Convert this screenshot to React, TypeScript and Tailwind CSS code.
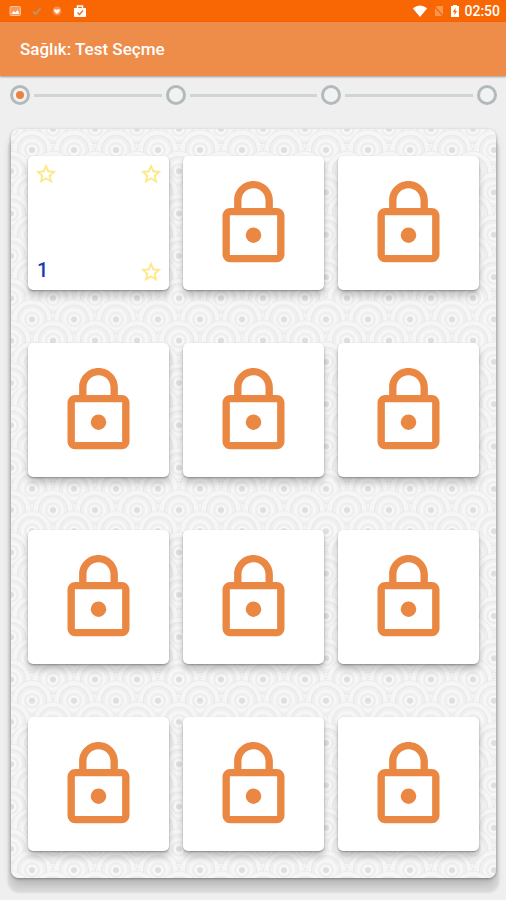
import React, { useState } from 'react';

interface Test {
  id: number;
  unlocked: boolean;
}

const PAGES = [1, 2, 3, 4];

const TESTS: Test[] = Array.from({ length: 12 }, (_, i) => ({ id: i + 1, unlocked: i === 0 }));

const LockIcon: React.FC = () => (
  <svg viewBox="0 0 24 24" className="h-[93px] w-[93px]" fill="#ea8843" aria-hidden="true">
    <path
      fillRule="evenodd"
      d="M18 8h-1V6c0-2.76-2.24-5-5-5S7 3.24 7 6v2H6c-1.1 0-2 .9-2 2v10c0 1.1.9 2 2 2h12c1.1 0 2-.9 2-2V10c0-1.1-.9-2-2-2zM8.9 6c0-1.71 1.39-3.1 3.1-3.1s3.1 1.39 3.1 3.1v2H8.9V6zM18.1 20.1H5.9V9.9h12.2v10.2z"
    />
    <circle cx="12" cy="15" r="2" />
  </svg>
);

const StarIcon: React.FC = () => (
  <svg viewBox="0 0 24 24" className="h-6 w-6" fill="#fde886" stroke="#fde886" strokeWidth="0.3" aria-hidden="true">
    <path d="M22 9.24l-7.19-.62L12 2 9.19 8.63 2 9.24l5.46 4.73L5.82 21 12 17.27 18.18 21l-1.63-7.03L22 9.24zM12 15.4l-3.76 2.27 1-4.28-3.32-2.88 4.38-.38L12 6.1l1.71 4.04 4.38.38-3.32 2.88 1 4.28L12 15.4z" />
  </svg>
);

const Scale: React.FC<{ x: number; y: number }> = ({ x, y }) => (
  <g>
    <circle cx={x} cy={y} r="20" fill="#f6f6f6" stroke="#e8e8e8" strokeWidth="1" strokeDasharray="2 1" />
    <circle cx={x} cy={y} r="14.5" fill="#f0f0f0" stroke="#e7e7e7" strokeWidth="1" />
    <circle cx={x} cy={y} r="11" fill="#f7f7f7" />
    <circle cx={x} cy={y} r="8" fill="#eeeeee" />
    <circle cx={x} cy={y} r="5.5" fill="#f8f8f8" />
    <circle cx={x} cy={y} r="3" fill="#dedede" />
  </g>
);

// overlapping circles, each row drawn over the one above it
const ScalePattern: React.FC = () => (
  <svg className="absolute inset-0 h-full w-full rounded-lg" aria-hidden="true">
    <defs>
      <pattern id="scales" width="42" height="42.36" patternUnits="userSpaceOnUse" patternTransform="translate(21 21)">
        {[-1, 0, 1, 2, 3].map(row =>
          [-1, 0, 1, 2].map(col => (
            <Scale key={`${row}-${col}`} x={col * 42 + (row % 2 === 0 ? 0 : 21)} y={row * 21.18} />
          ))
        )}
      </pattern>
    </defs>
    <rect width="100%" height="100%" fill="url(#scales)" />
  </svg>
);

const StatusBar: React.FC = () => (
  <div className="flex h-[22px] items-center justify-between bg-[#f96604] pl-2 pr-1.5">
    <div className="flex items-center gap-2">
      <svg viewBox="0 0 14 14" className="h-3.5 w-3.5" aria-hidden="true">
        <rect x="2" y="2.5" width="10.5" height="9" rx="1" fill="#fb9a58" stroke="#fdbf94" />
        <path d="M3.5 10l2-3 2 1.5L9.5 6l2 4z" fill="#fff" />
      </svg>
      <svg viewBox="0 0 14 14" className="h-3.5 w-3.5" aria-hidden="true">
        <path d="M3 7.5L5.5 10l5-5.5" fill="none" stroke="#b59a72" strokeWidth="1.8" />
      </svg>
      <svg viewBox="0 0 14 14" className="h-3.5 w-3.5" aria-hidden="true">
        <circle cx="5" cy="7" r="4.5" fill="#fb8d48" />
        <path d="M5 10L2.3 7.5V5L5 5.8 7.7 5v2.5z" fill="#fff" />
      </svg>
      <svg viewBox="0 0 14 14" className="h-3.5 w-3.5" aria-hidden="true">
        <path d="M-3 4" />
        <path d="M0 4h12v8q0 1-1 1H1q-1 0-1-1z" fill="#fff" />
        <path d="M3.5 4.5V2h5v2.5" fill="none" stroke="#fff" strokeWidth="1.5" />
        <path d="M3.5 8.5l2 2 3.5-4" fill="none" stroke="#f96604" strokeWidth="1.2" />
      </svg>
    </div>
    <div className="flex items-center gap-1">
      <svg viewBox="0 0 16 14" className="h-3.5 w-4" aria-hidden="true">
        <path d="M8 13L.8 4.2Q8-1 15.2 4.2z" fill="#fff" />
      </svg>
      <svg viewBox="0 0 14 14" className="h-3.5 w-3.5" aria-hidden="true">
        <path d="M5 2h6v10H3V4z" fill="#fb964f" />
        <path d="M3 3l8 9" stroke="#f96604" strokeWidth="1.2" />
      </svg>
      <svg viewBox="2 0 10 14" className="h-3.5 w-2.5" aria-hidden="true">
        <path d="M3 2h2V1h4v1h2v11H3z" fill="#fff" />
        <path d="M7.5 4L5 8h1.5v3L9 7H7.5z" fill="#f96604" />
      </svg>
      <span className="text-sm leading-4 font-medium text-white">02:50</span>
    </div>
  </div>
);

interface StepperProps {
  page: number;
  setPage: (page: number) => void;
}

const Stepper: React.FC<StepperProps> = ({ page, setPage }) => (
  <div className="flex items-center gap-1 pt-[9px] pr-[9px] pl-[10px]" role="radiogroup" aria-label="Sayfa">
    {PAGES.map(n => (
      <React.Fragment key={n}>
        {n > 1 && <span className="h-[3px] flex-1 bg-[#cfd4d5]" />}
        <label className="relative flex h-5 w-5 items-center justify-center">
          <input
            type="radio"
            name="page"
            aria-label={`Sayfa ${n}`}
            checked={page === n}
            onChange={() => setPage(n)}
            className="peer h-5 w-5 appearance-none rounded-full border-3 border-[#b3babd] bg-[#f1f2f2]"
          />
          <span className="absolute hidden h-2 w-2 rounded-full bg-[#ea8340] peer-checked:block" />
        </label>
      </React.Fragment>
    ))}
  </div>
);

const TestCard: React.FC<{ test: Test }> = ({ test }) => (
  <button
    type="button"
    disabled={!test.unlocked}
    aria-label={test.unlocked ? `Test ${test.id}` : `Test ${test.id} kilitli`}
    className="h-[134px] rounded-[5px] bg-white shadow-[0_1px_2px_rgba(0,0,0,0.3),0_6px_7px_rgba(0,0,0,0.2)]"
  >
    {test.unlocked ? (
      <span className="flex h-full flex-col justify-between p-1.5">
        <span className="flex justify-between">
          <StarIcon />
          <StarIcon />
        </span>
        <span className="flex items-start justify-between">
          <span className="pl-[3px] text-xl leading-5 font-medium text-[#1a3db0]">{test.id}</span>
          <StarIcon />
        </span>
      </span>
    ) : (
      <span className="flex h-full items-center justify-center">
        <LockIcon />
      </span>
    )}
  </button>
);

const App: React.FC = () => {
  const [page, setPage] = useState(1);

  return (
    <div className="min-h-screen bg-[#efefef] pb-[22px] font-['Roboto',sans-serif]">
      <StatusBar />
      <header className="flex h-[54px] items-center bg-[#ee8c4a] px-5 shadow-[0_1px_2px_rgba(0,0,0,0.35)]">
        <h1 className="text-[17px] leading-6 font-medium text-white">Sağlık: Test Seçme</h1>
      </header>
      <Stepper page={page} setPage={setPage} />
      <main className="relative mt-[24px] mr-[10px] ml-[11px] rounded-lg bg-[#f4f4f4] shadow-[0_1px_3px_rgba(0,0,0,0.35),0_12px_2px_3px_rgba(0,0,0,0.08),0_8px_8px_rgba(0,0,0,0.15)]">
        <ScalePattern />
        <div className="relative grid grid-cols-3 gap-x-[14px] gap-y-[53px] px-[17px] py-[27px]">
          {TESTS.map(test => (
            <TestCard key={test.id} test={test} />
          ))}
        </div>
      </main>
    </div>
  );
};

export default App;
